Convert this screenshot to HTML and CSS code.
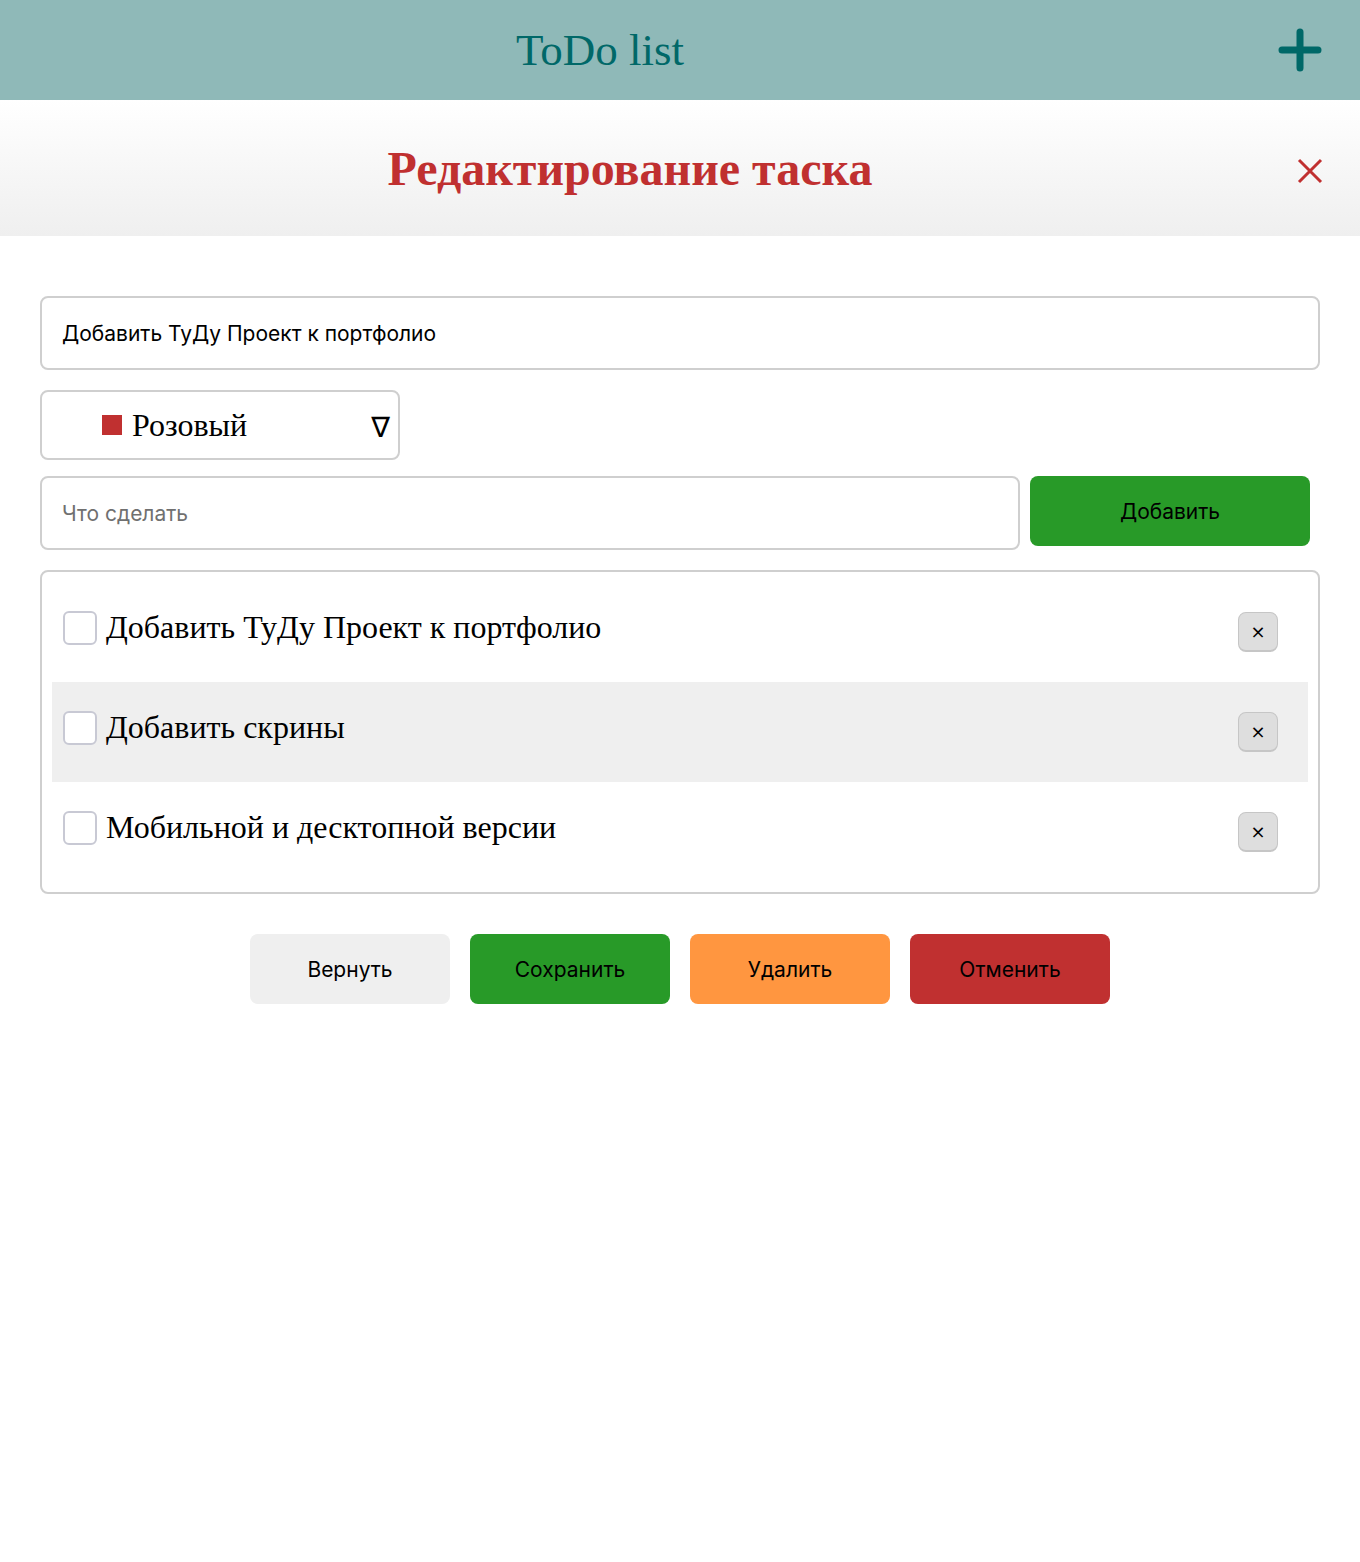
FILE: index.html
```html
<!DOCTYPE html>
<html lang="ru">
<head>
<meta charset="utf-8">
<title>ToDo list</title>
<link rel="stylesheet" href="styles.css">
</head>
<body>
<header class="topbar">
  <h1 class="topbar-title">ToDo list</h1>
  <button class="icon-btn add-btn" aria-label="Добавить">
    <svg width="44" height="44" viewBox="0 0 44 44"><path d="M22 4 V40 M4 22 H40" stroke="#006868" stroke-width="7" stroke-linecap="round" fill="none"/></svg>
  </button>
</header>
<section class="modal">
  <div class="modal-head">
    <h2 class="modal-title">Редактирование таска</h2>
    <button class="icon-btn close-btn" aria-label="Закрыть">
      <svg width="26" height="26" viewBox="0 0 26 26"><path d="M2 2 L24 24 M24 2 L2 24" stroke="#c03030" stroke-width="3" fill="none"/></svg>
    </button>
  </div>
  <div class="modal-body">
    <input class="field" type="text" value="Добавить ТуДу Проект к портфолио">
    <div class="select">
      <span class="swatch"></span>
      <span class="select-label">Розовый</span>
      <span class="select-arrow">∇</span>
    </div>
    <div class="add-row">
      <input class="field field-grow" type="text" placeholder="Что сделать">
      <button class="btn btn-green add-task">Добавить</button>
    </div>
    <ul class="tasks">
      <li class="task"><span class="check"></span><span class="task-text">Добавить ТуДу Проект к портфолио</span><button class="del">×</button></li>
      <li class="task task-alt"><span class="check"></span><span class="task-text">Добавить скрины</span><button class="del">×</button></li>
      <li class="task"><span class="check"></span><span class="task-text">Мобильной и десктопной версии</span><button class="del">×</button></li>
    </ul>
    <div class="actions">
      <button class="btn btn-grey">Вернуть</button>
      <button class="btn btn-green">Сохранить</button>
      <button class="btn btn-orange">Удалить</button>
      <button class="btn btn-red">Отменить</button>
    </div>
  </div>
</section>
</body>
</html>
```
FILE: styles.css
```css
* { box-sizing: border-box; }
body {
  margin: 0;
  font-family: "Liberation Serif", serif;
  background: #fff;
}
.topbar {
  height: 100px;
  background: #8fb9b8;
  display: flex;
  align-items: center;
  padding-right: 38px;
}
.topbar-title {
  flex: 1;
  margin: 0;
  text-align: center;
  font-family: "Liberation Serif", serif;
  font-weight: normal;
  font-size: 45px;
  color: #006868;
}
.icon-btn {
  border: 0;
  background: none;
  padding: 0;
  display: flex;
  align-items: center;
  justify-content: center;
  cursor: pointer;
}
.add-btn { width: 44px; height: 44px; margin-left: 78px; }
.modal-head {
  height: 136px;
  background: linear-gradient(#ffffff, #efefef);
  display: flex;
  align-items: center;
  padding-right: 37px;
}
.modal-title {
  flex: 1;
  margin: 0;
  text-align: center;
  font-size: 48px;
  font-weight: bold;
  color: #c03030;
}
.close-btn { width: 26px; height: 26px; margin-left: 37px; margin-top: 6px; }
.modal-body {
  padding: 60px 40px;
  display: flex;
  flex-direction: column;
  align-items: flex-start;
}
.field {
  width: 100%;
  height: 74px;
  border: 2px solid #cfcfcf;
  border-radius: 8px;
  padding: 0 20px;
  font-family: "Inter", "Liberation Sans", sans-serif;
  font-size: 21px;
  color: #000;
  outline: none;
}
.field::placeholder { color: #707070; }
.select {
  margin-top: 20px;
  width: 360px;
  height: 70px;
  border: 2px solid #cfcfcf;
  border-radius: 8px;
  display: flex;
  align-items: center;
  padding-left: 60px;
  padding-right: 8px;
}
.swatch {
  width: 20px;
  height: 20px;
  background: #c03030;
  margin-right: 10px;
}
.select-label { font-size: 32px; flex: 1; }
.select-arrow { font-family: "DejaVu Sans", sans-serif; font-size: 28px; margin-top: 4px; }
.add-row {
  margin-top: 16px;
  width: 100%;
  display: flex;
  gap: 10px;
  align-items: flex-start;
}
.field-grow { flex: 1; width: auto; }
.btn {
  width: 200px;
  height: 70px;
  border: 0;
  border-radius: 8px;
  font-family: "Inter", "Liberation Sans", sans-serif;
  font-size: 21px;
  color: #000;
  cursor: pointer;
}
.add-task { width: 280px; margin-right: 10px; }
.btn-green { background: #289a28; }
.btn-grey { background: #efefef; }
.btn-orange { background: #ff9640; }
.btn-red { background: #c03030; }
.tasks {
  list-style: none;
  margin: 20px 0 0;
  width: 100%;
  border: 2px solid #cfcfcf;
  border-radius: 8px;
  padding: 10px;
}
.task {
  height: 100px;
  display: flex;
  align-items: center;
  padding-left: 11px;
  padding-right: 30px;
}
.task-alt { background: #efefef; }
.check {
  width: 34px;
  height: 34px;
  border: 2px solid #c8c9d4;
  border-radius: 6px;
  background: #fff;
  margin-right: 9px;
  margin-top: -8px;
}
.task-text { flex: 1; font-size: 32px; margin-top: -10px; }
.del {
  width: 40px;
  height: 40px;
  border: 1px solid #c6c6c6;
  border-bottom-width: 2px;
  border-radius: 8px;
  background: #dedede;
  font-family: "DejaVu Sans", sans-serif;
  font-size: 18px;
  color: #000;
  padding: 0;
}
.actions {
  align-self: center;
  margin-top: 40px;
  display: flex;
  gap: 20px;
}
```
